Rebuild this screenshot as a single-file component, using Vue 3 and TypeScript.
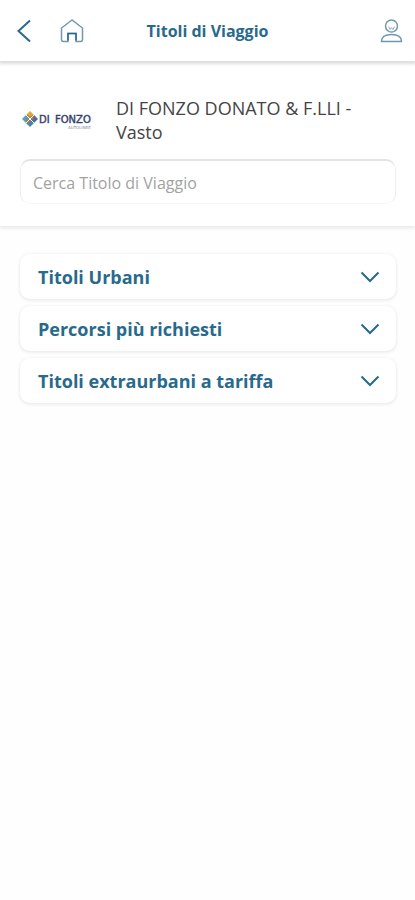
<script setup lang="ts">
import { ref } from 'vue'

const query = ref('')
const sections: string[] = ['Titoli Urbani', 'Percorsi più richiesti', 'Titoli extraurbani a tariffa']
const open = ref<string | null>(null)

function toggle(name: string) {
  open.value = open.value === name ? null : name
}
</script>

<template>
  <div class="screen">
    <header class="topbar">
      <nav class="side">
        <button class="icon-button" type="button" aria-label="Indietro">
          <svg width="24" height="24" viewBox="0 0 24 24">
            <path class="chevron" d="M18 1.500 6.500 12 18 22.500" />
          </svg>
        </button>
        <button class="icon-button" type="button" aria-label="Home">
          <svg width="24" height="24" viewBox="0 0 24 24">
            <path class="outline" d="M12 1 1.500 9v11.500a2 2 0 0 0 2 2H8v-8h8v8h4.500a2 2 0 0 0 2-2V9z" />
            <path class="door" d="M8 21.500v-7h8v7" />
          </svg>
        </button>
      </nav>
      <h1 class="title">Titoli di Viaggio</h1>
      <div class="side end">
        <button class="icon-button" type="button" aria-label="Profilo">
          <svg width="24" height="24" viewBox="0 0 24 24">
            <circle class="outline" cx="12.500" cy="7" r="6" />
            <path class="outline" d="M2.500 22.500c0-4.500 4-7 10-7s10 2.500 10 7z" />
            <path class="face" d="M9.500 7.500 11 10.500 12.500 8.500l1.500 2L15.500 7.500M10.500 12.500h4" />
          </svg>
        </button>
      </div>
    </header>

    <section class="company">
      <div class="identity">
        <svg class="logo" width="72" height="20" viewBox="0 0 72 20" role="img" aria-label="Di Fonzo Autolinee">
          <path fill="#5b9dbd" d="M0 9 4 5l4 4-4 4z" />
          <path fill="#e3a33d" d="M4 5 8 1l4 4-4 4z" />
          <path fill="#4a6f9c" d="m8 9 4-4 4 4-4 4z" />
          <path fill="#4189a4" d="m4 13 4-4 4 4-4 4z" />
          <path fill="#54a66b" d="m4 7 2-2 2 2-2 3z" />
          <path fill="#db6340" d="m8 7 3-2 1 3-2 2zM4 11l3-2 1 3-2 2z" />
          <path stroke="#fff" fill="none" d="m4 5 8 8M12 5l-8 8" />
          <text class="mark" x="17" y="13">DI</text>
          <text class="mark" x="33" y="13">FONZO</text>
          <text class="submark" x="46" y="19">AUTOLINEE</text>
        </svg>
        <h2 class="name">DI FONZO DONATO &amp; F.LLI - Vasto</h2>
      </div>
      <input v-model="query" class="search" type="text" placeholder="Cerca Titolo di Viaggio" aria-label="Cerca Titolo di Viaggio" />
    </section>

    <main class="list">
      <button
        v-for="name in sections"
        :key="name"
        class="item"
        type="button"
        :aria-expanded="open === name"
        @click="toggle(name)"
      >
        <span>{{ name }}</span>
        <svg width="20" height="12" viewBox="0 0 20 12">
          <path class="chevron" d="m1.500 1.500 8.500 8.500 8.500-8.500" />
        </svg>
      </button>
    </main>
  </div>
</template>

<style>
body {
  background: #fefefe;
}
</style>

<style scoped>
.screen {
  min-height: 100vh;
  font-family: "Open Sans", "Noto Sans", sans-serif;
  color: #444;
}
.screen * {
  box-sizing: border-box;
}
button {
  font: inherit;
  border: 0;
  cursor: pointer;
}
svg {
  display: block;
  flex: none;
}
.topbar {
  position: relative;
  display: flex;
  align-items: center;
  height: 61px;
  padding: 0 12px;
  background: #fff;
  box-shadow: 0 2px 3px 1px #dedede;
}
.side {
  display: flex;
  flex: 1;
  gap: 24px;
}
.end {
  justify-content: flex-end;
}
.icon-button {
  padding: 0;
  background: none;
}
.title {
  margin: 0;
  font-size: 16px;
  line-height: 24px;
  font-weight: 700;
  color: #286a8c;
}
.chevron {
  fill: none;
  stroke: #286a8c;
  stroke-width: 2;
}
.outline {
  fill: none;
  stroke: #7398ad;
  stroke-width: 1.5;
}
.door {
  fill: none;
  stroke: #286a8c;
  stroke-width: 1.5;
}
.face {
  fill: none;
  stroke: #8fb0c2;
}
.company {
  padding: 35px 19px 22px 20px;
  background: #fff;
  box-shadow: 0 2px 4px #e6e6e6;
}
.identity {
  display: flex;
  align-items: center;
  gap: 22px;
  padding: 0 20px 0 2px;
}
.mark {
  font: 10px "DejaVu Sans", sans-serif;
  fill: #34406b;
  stroke: #34406b;
  stroke-width: 0.4;
}
.submark {
  font: 4px "DejaVu Sans", sans-serif;
  fill: #7d84a0;
}
.name {
  flex: 1;
  margin: 0;
  font-size: 18px;
  line-height: 24px;
  font-weight: 400;
}
.search {
  display: block;
  width: 100%;
  height: 45px;
  margin-top: 15px;
  padding: 2px 12px 0;
  font: inherit;
  font-size: 16px;
  color: #333;
  background: #fff;
  border: 1px solid #efefef;
  border-top: 2px solid #e4e4e4;
  border-bottom-color: #f7f7f7;
  border-radius: 10px;
  outline: none;
}
.search::placeholder {
  color: #a2a2a2;
  opacity: 1;
}
.list {
  display: flex;
  flex-direction: column;
  gap: 7px;
  padding: 28px 19px 28px 20px;
}
.item {
  display: flex;
  align-items: center;
  justify-content: space-between;
  height: 45px;
  padding: 0 16px 0 18px;
  font-size: 18px;
  line-height: 24px;
  font-weight: 700;
  color: #286a8c;
  background: #fff;
  border-radius: 10px;
  box-shadow: 0 1px 3px 1px #eeeeee;
}
</style>
